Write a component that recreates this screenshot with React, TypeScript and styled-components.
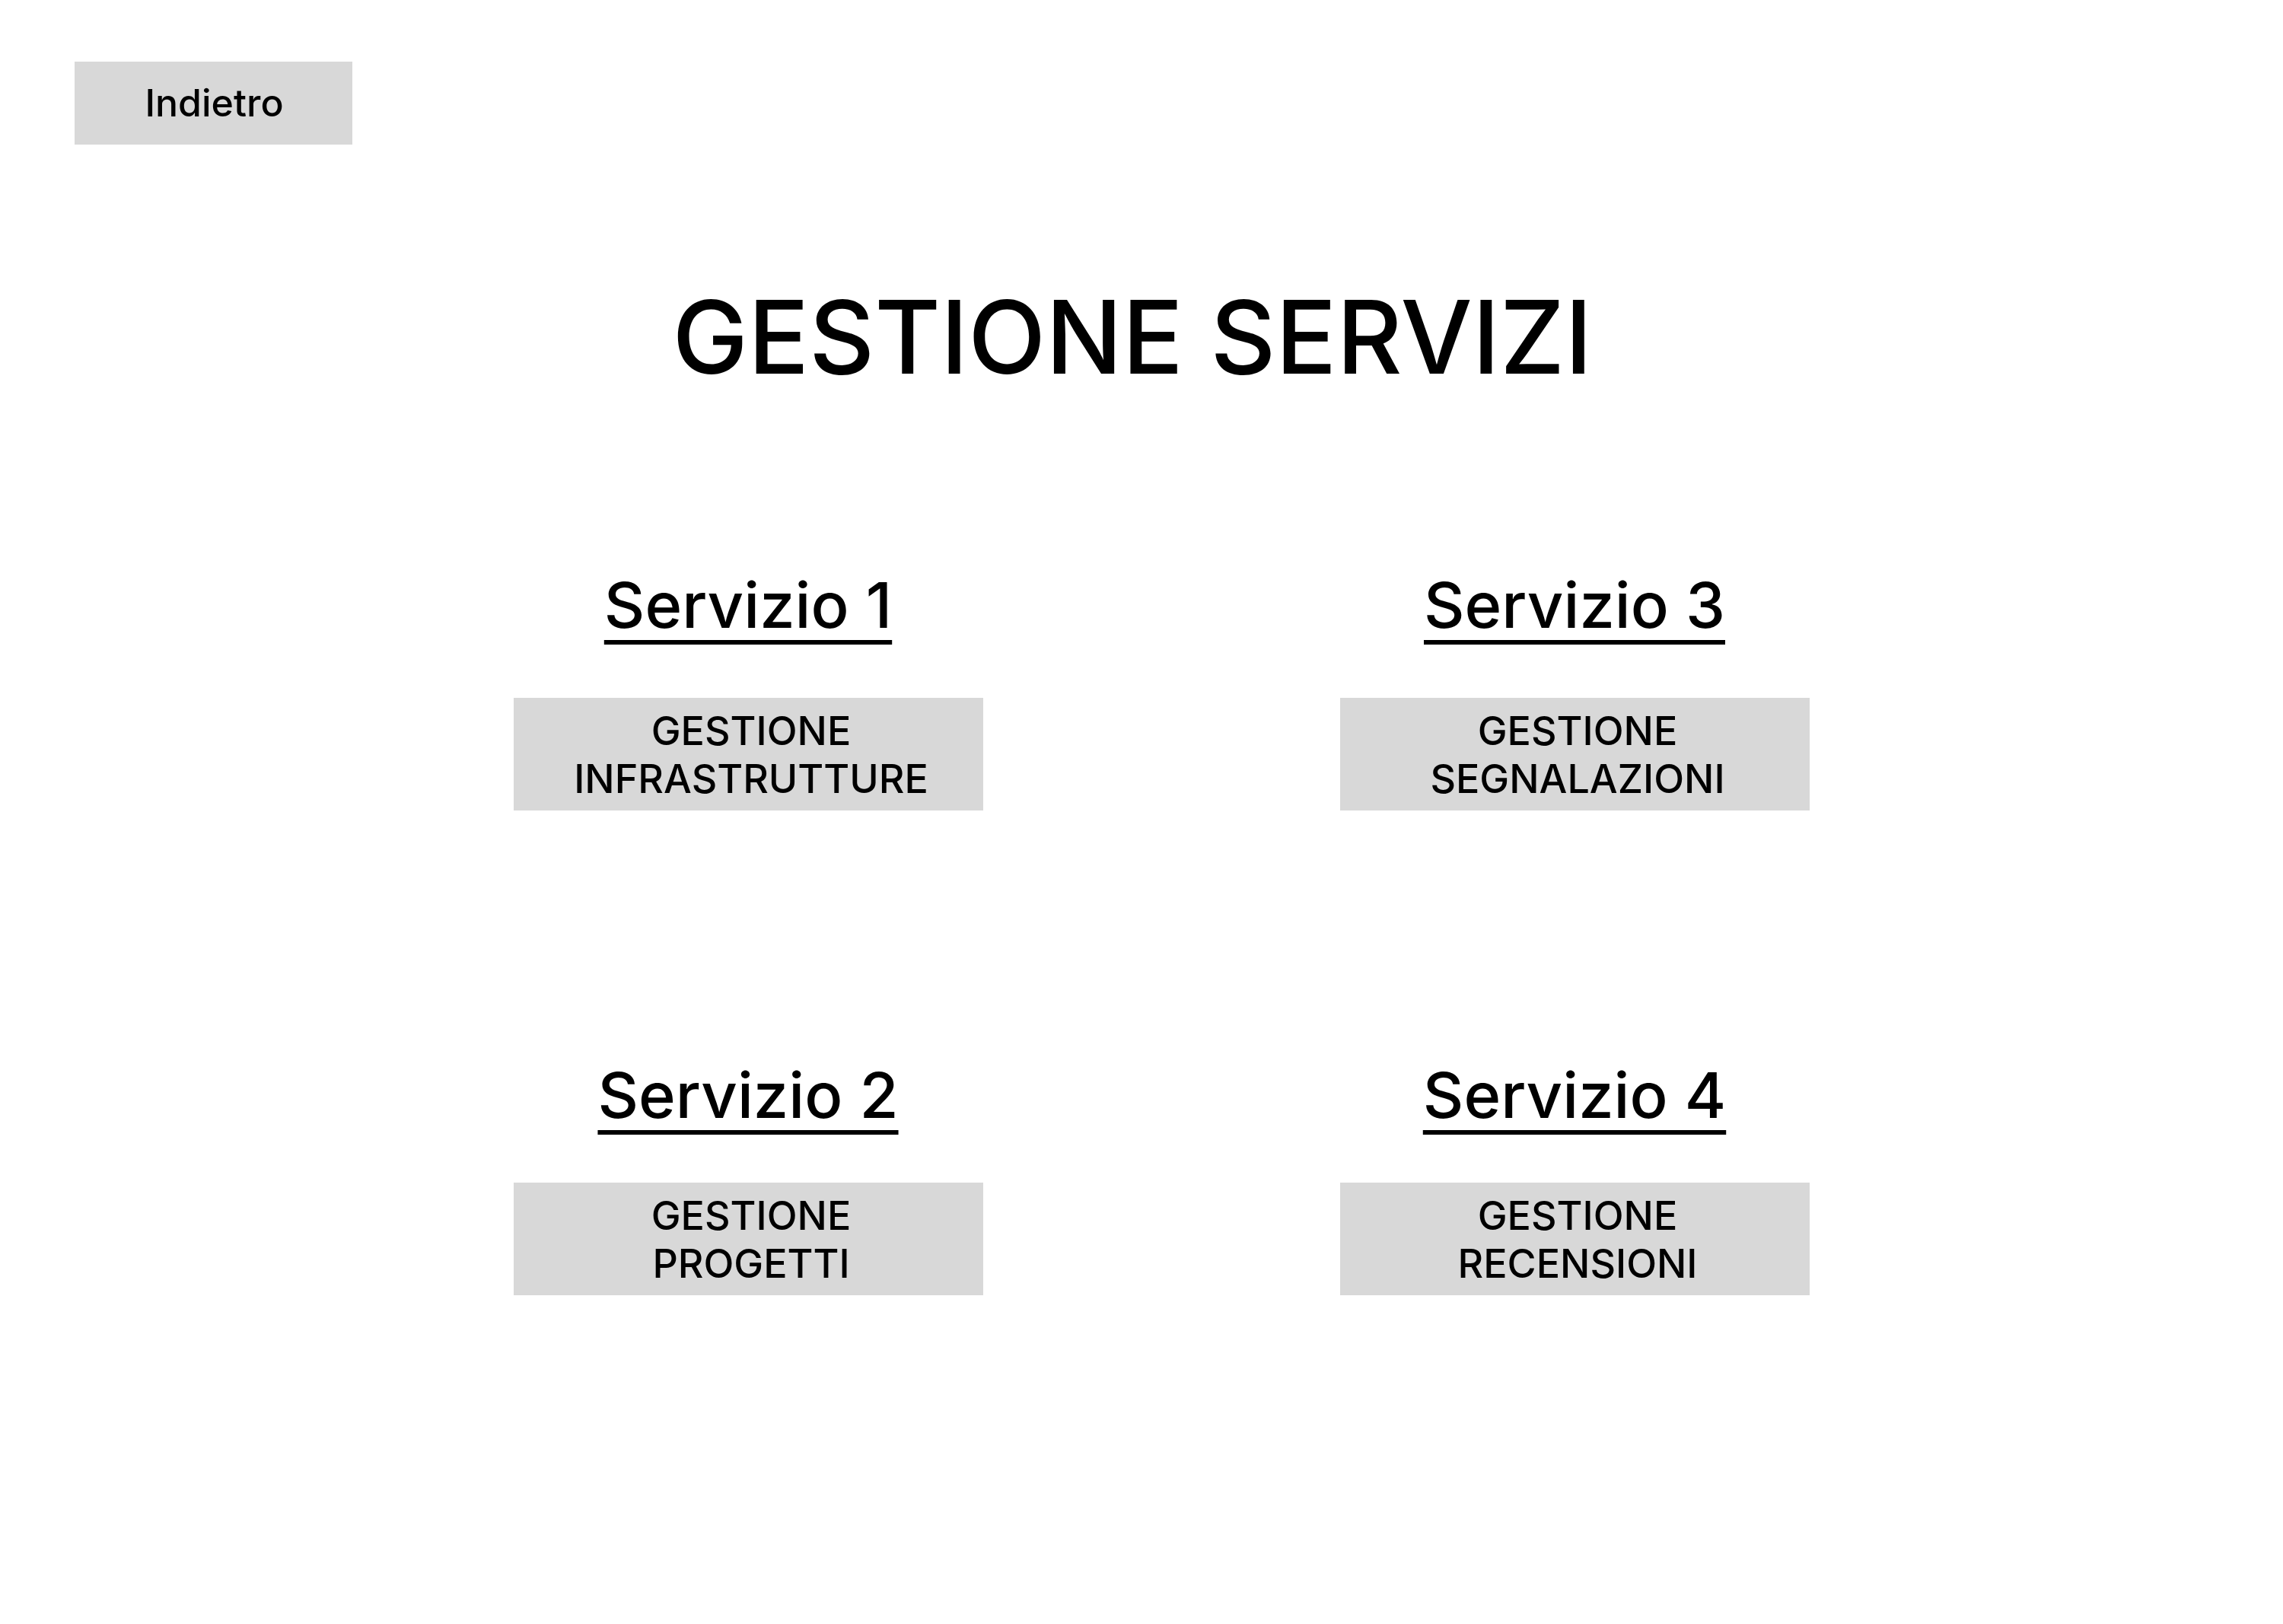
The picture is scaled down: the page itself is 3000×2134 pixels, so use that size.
import React from "react";
import styled, { createGlobalStyle } from "styled-components";

const GlobalStyle = createGlobalStyle`
  *, *::before, *::after {
    box-sizing: border-box;
  }

  body {
    margin: 0;
    background: #ffffff;
    color: #000000;
    font-family: Inter, "Liberation Sans", sans-serif;
    font-optical-sizing: none;
    font-weight: 500;
  }
`;

const Page = styled.div`
  display: flex;
  flex-direction: column;
  min-height: 100vh;
`;

const TopBar = styled.header`
  display: flex;
  padding: 81px 98px 0;
`;

const Button = styled.button`
  border: 0;
  background: #d8d8d8;
  color: inherit;
  font: inherit;
  text-align: center;
  cursor: pointer;
`;

const BackButton = styled(Button)`
  width: 365px;
  height: 109px;
  padding: 0 0 2px 2px;
  font-size: 50px;
  line-height: 60px;
`;

const Title = styled.h1`
  margin: 173px 0 0;
  padding-right: 24px;
  font-size: 133px;
  line-height: 160px;
  font-weight: 500;
  text-align: center;
`;

const Services = styled.main`
  display: grid;
  grid-template-columns: repeat(2, 617px);
  justify-content: center;
  gap: 324px 469px;
  margin-top: 222px;
  padding: 0 0 120px 52px;
`;

const Service = styled.section<{ $gap: number }>`
  display: flex;
  flex-direction: column;
  gap: ${({ $gap }) => $gap}px;
`;

const ServiceName = styled.h2`
  margin: 0;
  font-size: 83px;
  line-height: 100px;
  font-weight: 500;
  text-align: center;
  text-decoration: underline;
  text-decoration-thickness: 6px;
  text-underline-offset: 16px;
  text-decoration-skip-ink: none;
`;

const ServiceButton = styled(Button)`
  display: flex;
  flex-direction: column;
  align-items: center;
  justify-content: center;
  height: 148px;
  padding: 2px 0 0 8px;
  font-size: 52px;
  line-height: 63px;
`;

const services = [
  { name: "Servizio 1", target: "INFRASTRUTTURE", gap: 72 },
  { name: "Servizio 3", target: "SEGNALAZIONI", gap: 72 },
  { name: "Servizio 2", target: "PROGETTI", gap: 65 },
  { name: "Servizio 4", target: "RECENSIONI", gap: 65 },
];

export default function App() {
  return (
    <Page>
      <GlobalStyle />
      <TopBar>
        <BackButton type="button">Indietro</BackButton>
      </TopBar>
      <Title>GESTIONE SERVIZI</Title>
      <Services>
        {services.map(({ name, target, gap }) => (
          <Service key={name} $gap={gap}>
            <ServiceName>{name}</ServiceName>
            <ServiceButton type="button">
              <span>GESTIONE</span>
              <span>{target}</span>
            </ServiceButton>
          </Service>
        ))}
      </Services>
    </Page>
  );
}
